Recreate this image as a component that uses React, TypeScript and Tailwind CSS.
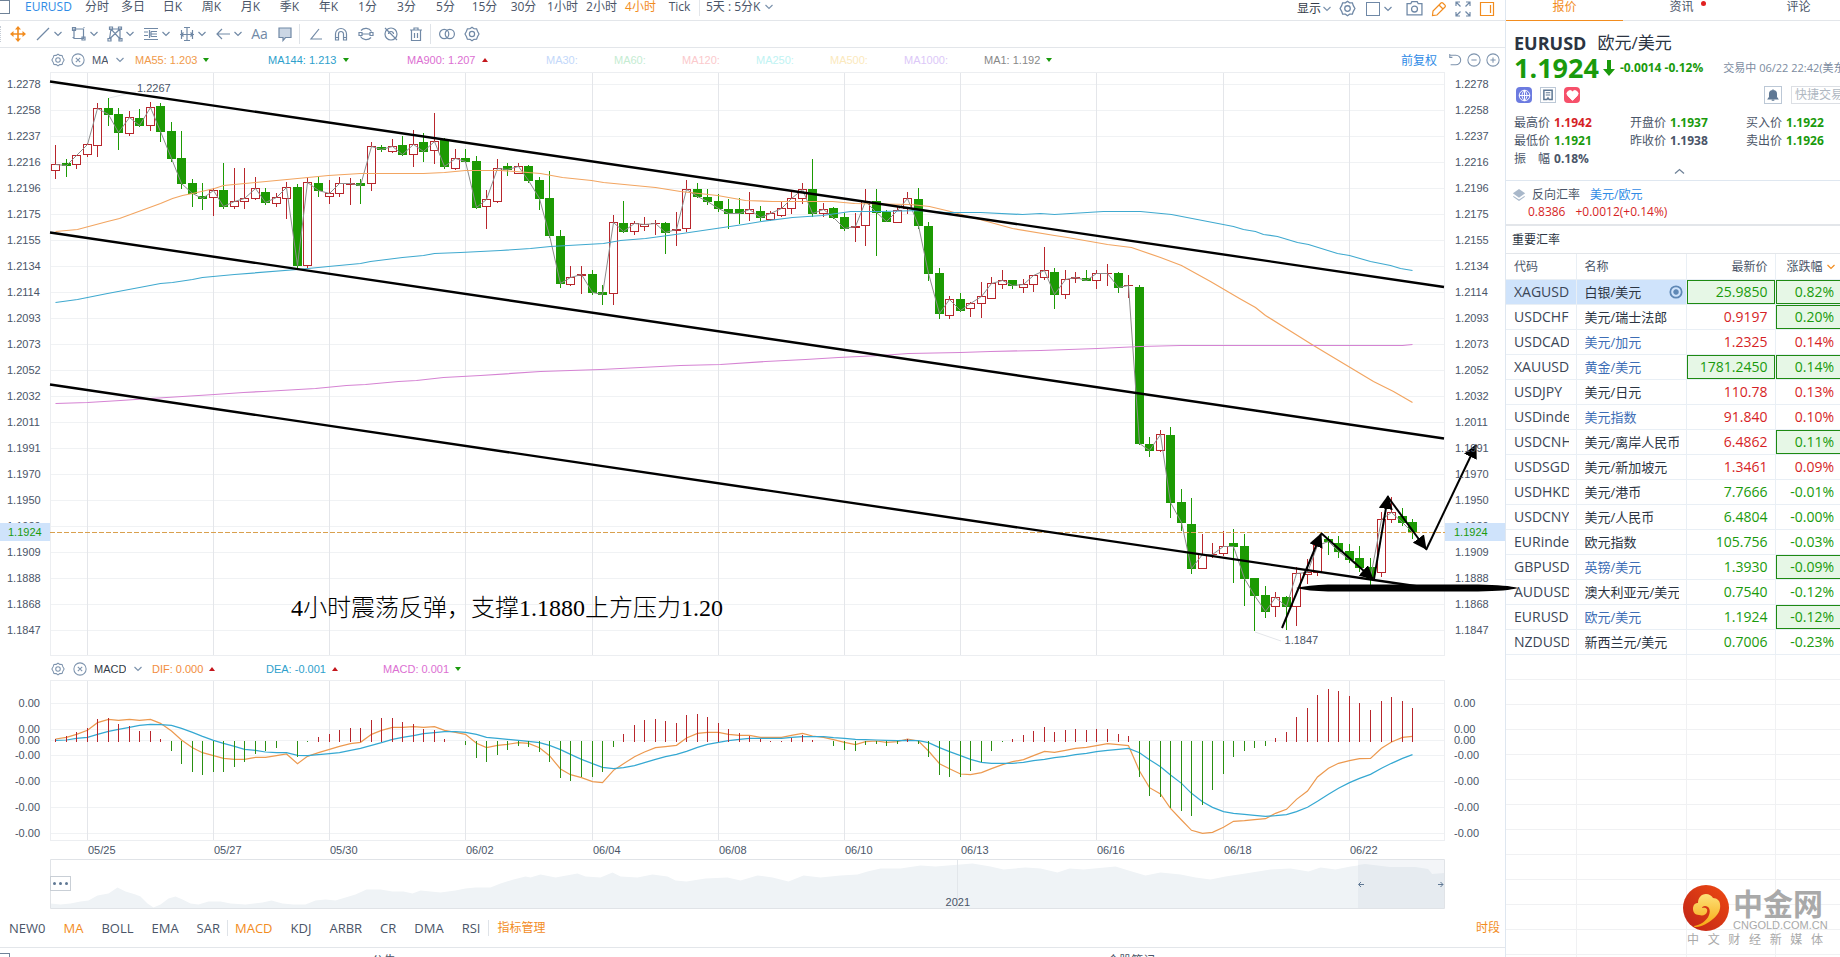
import React from "react";
import clsx from "clsx";

type Candle = [up: 0 | 1, high: number, top: number, bottom: number, low: number];
type Point = [number, number];

// Candles, one per 4h bar: direction and high / body top / body bottom / low
const candles: Candle[] = [
  [1, 145, 164, 171, 179], [0, 159, 163, 166, 177], [1, 155, 155, 165, 169], [1, 143, 144, 155, 157],
  [1, 103, 108, 146, 157], [0, 98, 108, 115, 126], [0, 108, 114, 133, 150], [1, 111, 117, 134, 136],
  [0, 109, 118, 126, 127], [1, 102, 107, 126, 131], [0, 103, 106, 132, 142], [0, 122, 131, 159, 162],
  [0, 131, 158, 184, 189], [0, 179, 183, 194, 207], [0, 183, 196, 199, 210], [1, 188, 190, 198, 216],
  [0, 163, 190, 207, 209], [1, 168, 201, 207, 209], [1, 168, 198, 202, 209], [1, 177, 188, 199, 200],
  [0, 188, 192, 203, 205], [1, 193, 197, 204, 207], [1, 182, 187, 199, 219], [0, 184, 187, 266, 269],
  [1, 177, 182, 266, 269], [0, 177, 183, 191, 197], [1, 180, 193, 197, 204], [1, 177, 183, 194, 197],
  [1, 178, 183, 185, 205], [0, 179, 183, 186, 204], [1, 142, 146, 184, 191], [0, 145, 147, 150, 152],
  [1, 139, 146, 152, 153], [0, 136, 145, 155, 156], [1, 130, 144, 155, 167], [0, 133, 142, 152, 162],
  [1, 113, 141, 151, 164], [0, 138, 139, 167, 169], [1, 149, 158, 169, 170], [0, 149, 158, 162, 163],
  [0, 156, 161, 208, 209], [1, 190, 199, 207, 229], [1, 159, 168, 202, 203], [0, 163, 166, 170, 176],
  [1, 163, 166, 174, 174], [0, 165, 166, 181, 183], [0, 177, 180, 199, 210], [0, 171, 198, 236, 238],
  [0, 230, 236, 284, 288], [1, 266, 277, 285, 286], [1, 266, 274, 276, 294], [0, 270, 274, 293, 295],
  [0, 285, 292, 295, 305], [1, 215, 222, 294, 305], [0, 201, 223, 232, 233], [1, 221, 223, 232, 235],
  [1, 217, 224, 227, 231], [1, 220, 223, 224, 235], [0, 222, 223, 233, 254], [1, 212, 229, 231, 246],
  [1, 180, 189, 229, 232], [0, 183, 189, 197, 198], [0, 189, 197, 202, 205], [0, 194, 201, 209, 212],
  [0, 199, 209, 214, 229], [0, 198, 209, 214, 224], [1, 192, 209, 214, 221], [0, 206, 211, 218, 221],
  [1, 211, 213, 220, 221], [1, 202, 208, 216, 217], [1, 191, 198, 209, 214], [1, 183, 189, 199, 204],
  [0, 159, 189, 214, 217], [1, 203, 209, 214, 217], [0, 207, 208, 218, 219], [0, 213, 217, 229, 231],
  [1, 213, 226, 228, 242], [1, 189, 201, 226, 246], [0, 189, 201, 213, 256], [0, 210, 212, 222, 222],
  [1, 207, 210, 223, 223], [1, 192, 198, 209, 214], [0, 188, 199, 226, 229], [0, 222, 226, 274, 281],
  [0, 268, 273, 314, 319], [1, 296, 299, 316, 319], [0, 293, 299, 311, 312], [1, 302, 303, 309, 317],
  [1, 282, 296, 304, 318], [1, 277, 283, 299, 299], [1, 270, 280, 285, 289], [0, 280, 280, 286, 289],
  [1, 279, 284, 288, 293], [1, 275, 275, 285, 292], [1, 247, 270, 278, 280], [0, 268, 272, 295, 309],
  [1, 270, 279, 295, 299], [1, 272, 277, 279, 283], [0, 270, 278, 281, 281], [1, 270, 273, 281, 289],
  [1, 264, 273, 274, 286], [0, 272, 273, 288, 293], [1, 275, 285, 286, 298], [0, 285, 287, 444, 445],
  [0, 437, 444, 451, 457], [1, 430, 434, 451, 452], [0, 427, 435, 503, 518], [0, 489, 502, 523, 531],
  [0, 498, 524, 569, 574], [1, 534, 554, 569, 569], [1, 543, 554, 555, 558], [1, 531, 546, 554, 556],
  [0, 529, 543, 547, 583], [0, 534, 546, 579, 606], [0, 578, 578, 596, 631], [0, 586, 595, 612, 618],
  [1, 592, 597, 607, 617], [0, 596, 597, 607, 630], [1, 567, 573, 607, 626], [1, 559, 572, 575, 584],
  [1, 543, 545, 573, 576], [0, 536, 539, 542, 555], [0, 536, 543, 552, 558], [0, 544, 551, 560, 563],
  [0, 546, 558, 568, 572], [0, 558, 567, 578, 585], [1, 512, 519, 573, 577], [1, 497, 512, 520, 523],
  [0, 508, 516, 523, 526], [0, 519, 522, 533, 539],
];

const ma55: Point[] = [
  [55, 231], [77, 229], [107, 221], [119, 218], [160, 203], [172, 198], [182, 195], [192, 193], [214, 188],
  [223, 185], [255, 182], [297, 178], [328, 175], [360, 173], [423, 173], [444, 172], [465, 170], [500, 170],
  [515, 171], [540, 173], [562, 177], [591, 180], [603, 182], [655, 187], [680, 191], [717, 195], [745, 200],
  [772, 201], [832, 201], [854, 203], [910, 204], [929, 206], [950, 211], [983, 220], [1012, 228], [1054, 235],
  [1067, 237], [1107, 244], [1131, 247], [1160, 257], [1181, 265], [1210, 281], [1239, 298], [1255, 307],
  [1265, 315], [1297, 335], [1313, 345], [1373, 381], [1393, 391], [1412, 402],
];

const ma144: Point[] = [
  [55, 302], [77, 299], [107, 293], [139, 287], [160, 283], [172, 282], [192, 279], [202, 277], [234, 274],
  [297, 269], [328, 266], [360, 263], [370, 261], [402, 257], [423, 255], [434, 253], [460, 252], [500, 250],
  [530, 248], [550, 246], [603, 243], [620, 240], [645, 238], [675, 234], [743, 224], [761, 221], [792, 217],
  [822, 215], [850, 211], [880, 211], [920, 210], [945, 212], [980, 212], [1022, 214], [1040, 213], [1054, 214],
  [1103, 211], [1140, 211], [1171, 214], [1233, 226], [1243, 229], [1255, 231], [1263, 234], [1277, 236],
  [1297, 242], [1308, 244], [1337, 253], [1349, 255], [1370, 261], [1390, 265], [1400, 268], [1412, 270],
];

const ma900: Point[] = [
  [55, 403], [87, 402], [120, 400], [150, 398], [214, 394], [243, 392], [263, 391], [315, 388], [346, 385],
  [365, 384], [398, 381], [416, 380], [443, 377], [480, 375], [540, 371], [600, 369], [680, 365], [720, 364],
  [765, 361], [805, 359], [838, 357], [880, 355], [908, 353], [960, 352], [990, 351], [1040, 350], [1097, 348],
  [1140, 346], [1180, 345], [1402, 345], [1412, 344],
];

const macdBars = [
  3, 6, 10, 14, 23, 24, 18, 16, 11, 11, 3, -10, -23, -31, -34, -31, -31, -26, -21, -13, -10, -7, 0, -16, -1, 5, 8,
  12, 14, 14, 22, 24, 24, 20, 18, 13, 12, 3, 0, -4, -17, -21, -14, -9, -5, -6, -11, -21, -37, -40, -36, -36, -31,
  -6, 8, 17, 22, 23, 21, 19, 27, 28, 25, 19, 13, 9, 6, 3, 1, 1, 4, 7, 2, 0, -5, -9, -10, -4, -3, -5, -3, 3, -3,
  -16, -34, -36, -36, -30, -21, -10, -1, 3, 7, 11, 15, 10, 12, 13, 12, 13, 13, 8, 6, -36, -55, -56, -67, -70, -75,
  -64, -49, -33, -16, -10, -7, -5, 4, 10, 25, 34, 47, 53, 51, 46, 39, 32, 41, 45, 41, 34,
];

// DIF / DEA are kept in thirds of a pixel so the slow curve stays smooth
const dif = [
  297, 292, 283, 271, 248, 238, 241, 238, 241, 238, 250, 273, 300, 323, 338, 347, 355, 358, 358, 352, 352, 347,
  342, 371, 349, 338, 328, 319, 311, 307, 283, 271, 262, 262, 260, 262, 260, 271, 277, 283, 310, 323, 316, 313,
  308, 310, 323, 347, 387, 404, 413, 425, 428, 391, 371, 350, 336, 323, 320, 316, 294, 280, 277, 277, 283, 286,
  286, 292, 292, 292, 286, 280, 288, 292, 299, 307, 314, 305, 303, 307, 305, 297, 303, 333, 371, 386, 402, 404,
  398, 386, 374, 365, 359, 347, 334, 337, 331, 325, 322, 317, 311, 314, 317, 393, 443, 462, 505, 540, 571, 580,
  577, 562, 544, 542, 539, 536, 520, 508, 478, 453, 411, 385, 370, 362, 356, 355, 325, 306, 292, 289,
];
const dea = [
  301, 300, 295, 292, 283, 274, 268, 262, 256, 253, 254, 256, 265, 277, 289, 301, 310, 319, 328, 331, 336, 338,
  338, 346, 347, 344, 341, 338, 331, 325, 316, 308, 298, 292, 287, 281, 278, 275, 275, 277, 283, 292, 295, 298,
  301, 304, 308, 316, 329, 343, 358, 371, 382, 386, 383, 377, 368, 358, 350, 343, 334, 322, 313, 307, 302, 298,
  295, 295, 295, 295, 292, 290, 290, 290, 293, 295, 298, 299, 300, 301, 302, 301, 302, 308, 323, 335, 347, 358,
  367, 370, 370, 370, 367, 362, 358, 353, 349, 344, 340, 335, 331, 328, 325, 338, 359, 380, 405, 430, 460, 485,
  502, 515, 520, 523, 526, 529, 527, 524, 515, 502, 484, 463, 445, 428, 415, 403, 385, 370, 355, 344,
];

const overview: Point[] = [
  [50, 903], [60, 904], [70, 903], [80, 901], [88, 900], [97, 895], [108, 893], [117, 887], [125, 891], [135, 894],
  [140, 896], [147, 903], [153, 907], [160, 904], [168, 898], [175, 896], [182, 899], [190, 903], [198, 904],
  [208, 901], [220, 901], [230, 903], [245, 904], [262, 902], [271, 900], [282, 903], [293, 904], [305, 904],
  [315, 900], [325, 899], [335, 900], [345, 897], [355, 894], [366, 889], [380, 889], [392, 891], [403, 891],
  [412, 893], [420, 890], [440, 892], [455, 890], [465, 888], [475, 887], [490, 887], [500, 883], [513, 879],
  [525, 876], [530, 877], [540, 874], [555, 877], [577, 873], [585, 876], [600, 877], [612, 872], [620, 876],
  [637, 877], [652, 874], [667, 876], [675, 880], [686, 881], [705, 878], [727, 877], [740, 880], [757, 875],
  [772, 877], [788, 881], [803, 875], [820, 877], [840, 875], [857, 874], [867, 871], [880, 868], [900, 868],
  [920, 865], [935, 866], [960, 864], [972, 863], [990, 866], [1003, 869], [1025, 867], [1040, 868], [1057, 872],
  [1069, 868], [1083, 869], [1115, 866], [1128, 870], [1145, 875], [1160, 872], [1180, 874], [1195, 877],
  [1210, 879], [1225, 876], [1245, 873], [1270, 869], [1290, 868], [1308, 871], [1320, 867], [1335, 869],
  [1350, 866], [1365, 864], [1390, 867], [1415, 867], [1428, 869], [1432, 874], [1444, 873],
];

const priceTicks = [
  "1.2278", "1.2258", "1.2237", "1.2216", "1.2196", "1.2175", "1.2155", "1.2134", "1.2114", "1.2093", "1.2073",
  "1.2052", "1.2032", "1.2011", "1.1991", "1.1970", "1.1950", "1.1929", "1.1909", "1.1888", "1.1868", "1.1847",
];

const macdTicks = [
  { value: "0.00", y: 63, gap: "mt-[17px]" },
  { value: "0.00", y: 89, gap: "mt-[14px]" },
  { value: "0.00", y: 100, gap: "-mt-px" },
  { value: "-0.00", y: 115, gap: "mt-[3px]" },
  { value: "-0.00", y: 141, gap: "mt-[14px]" },
  { value: "-0.00", y: 167, gap: "mt-[14px]" },
  { value: "-0.00", y: 193, gap: "mt-[14px]" },
];

const dates = [
  { index: 3, label: "05/25" },
  { index: 15, label: "05/27" },
  { index: 26, label: "05/30" },
  { index: 39, label: "06/02" },
  { index: 51, label: "06/04" },
  { index: 63, label: "06/08" },
  { index: 75, label: "06/10" },
  { index: 86, label: "06/13" },
  { index: 99, label: "06/16" },
  { index: 111, label: "06/18" },
  { index: 123, label: "06/22" },
];

const periods = [
  "日K", "周K", "月K", "季K", "年K", "1分", "3分", "5分", "15分", "30分", "1小时", "2小时", "4小时", "Tick",
];

const quotes = [
  { code: "XAGUSD", name: "白银/美元", price: "25.9850", change: "0.82%", up: false, changeUp: false, priceBox: true, changeBox: true, active: true },
  { code: "USDCHF", name: "美元/瑞士法郎", price: "0.9197", change: "0.20%", up: true, changeUp: false, changeBox: true },
  { code: "USDCAD", name: "美元/加元", price: "1.2325", change: "0.14%", up: true, changeUp: true, link: true },
  { code: "XAUUSD", name: "黄金/美元", price: "1781.2450", change: "0.14%", up: false, changeUp: false, priceBox: true, changeBox: true, link: true },
  { code: "USDJPY", name: "美元/日元", price: "110.78", change: "0.13%", up: true, changeUp: true },
  { code: "USDindex", name: "美元指数", price: "91.840", change: "0.10%", up: true, changeUp: true, link: true },
  { code: "USDCNH", name: "美元/离岸人民币", price: "6.4862", change: "0.11%", up: true, changeUp: false, changeBox: true },
  { code: "USDSGD", name: "美元/新加坡元", price: "1.3461", change: "0.09%", up: true, changeUp: true },
  { code: "USDHKD", name: "美元/港币", price: "7.7666", change: "-0.01%", up: false, changeUp: false },
  { code: "USDCNY", name: "美元/人民币", price: "6.4804", change: "-0.00%", up: false, changeUp: false },
  { code: "EURindex", name: "欧元指数", price: "105.756", change: "-0.03%", up: false, changeUp: false },
  { code: "GBPUSD", name: "英镑/美元", price: "1.3930", change: "-0.09%", up: false, changeUp: false, changeBox: true, link: true },
  { code: "AUDUSD", name: "澳大利亚元/美元", price: "0.7540", change: "-0.12%", up: false, changeUp: false },
  { code: "EURUSD", name: "欧元/美元", price: "1.1924", change: "-0.12%", up: false, changeUp: false, changeBox: true, link: true },
  { code: "NZDUSD", name: "新西兰元/美元", price: "0.7006", change: "-0.23%", up: false, changeUp: false },
];

const stats = [
  { label: "最高价", value: "1.1942", color: "text-[#d61f26]" },
  { label: "开盘价", value: "1.1937", color: "text-[#1a9a0c]" },
  { label: "买入价", value: "1.1922", color: "text-[#1a9a0c]" },
  { label: "最低价", value: "1.1921", color: "text-[#1a9a0c]" },
  { label: "昨收价", value: "1.1938", color: "text-[#4a5568]" },
  { label: "卖出价", value: "1.1926", color: "text-[#1a9a0c]" },
  { label: "振　幅", value: "0.18%", color: "text-[#4a5568]" },
];

const barX = (index: number) => 55 + Math.round(index * 10.52);
const toPoints = (points: Point[]) => points.map(([x, y]) => `${x + 0.5},${y + 0.5}`).join(" ");
const seriesPoints = (values: number[]) => values.map((v, i) => `${barX(i) + 0.5},${v / 3}`).join(" ");

function Icon({
  size = 16,
  className,
  children,
}: {
  size?: number;
  className?: string;
  children: React.ReactNode;
}) {
  return (
    <svg
      width={size}
      height={size}
      viewBox="0 0 16 16"
      fill="none"
      stroke="currentColor"
      strokeWidth="1.2"
      className={clsx("shrink-0", className)}
      aria-hidden="true"
    >
      {children}
    </svg>
  );
}

function Chevron({ className }: { className?: string }) {
  return (
    <svg
      width="8"
      height="6"
      viewBox="0 0 8 6"
      fill="none"
      stroke="currentColor"
      strokeWidth="1.2"
      className={clsx("shrink-0", className)}
    >
      <path d="M.5 1L4 4.500 7.500 1" />
    </svg>
  );
}

function Gear({ size = 16 }: { size?: number }) {
  return (
    <Icon size={size}>
      <path d="M8 1.200l2 1.500 2.600.1.900 2.500L15 8l-1.500 2.700-.9 2.500-2.600.1-2 1.500-2-1.500-2.600-.1-.9-2.500L1 8l1.500-2.700.9-2.500L6 2.700z" />
      <circle cx="8" cy="8" r="2.600" />
    </Icon>
  );
}

function CloseCircle({ size = 14 }: { size?: number }) {
  return (
    <Icon size={size}>
      <circle cx="8" cy="8" r="7" />
      <path d="M5.500 5.500l5 5M10.500 5.500l-5 5" />
    </Icon>
  );
}

function Triangle({ up }: { up?: boolean }) {
  return (
    <svg width="6" height="4" viewBox="0 0 6 4" className={up ? "text-[#c4161c]" : "text-[#1a9a0c]"}>
      <path d={up ? "M0 4l3-4 3 4z" : "M0 0l3 4 3-4z"} fill="currentColor" />
    </svg>
  );
}

function TopBar() {
  return (
    <div className="flex h-[21px] shrink-0 items-start border-b border-[#e3e6ea] text-xs leading-[14px] text-[#4a5568]">
      <span className="h-3.5 w-2.5 shrink-0 border border-l-0 border-[#6f8298]" />
      <span className="ml-[15px] w-[54px] text-[#2f8be6]">EURUSD</span>
      <button type="button" className="w-9">分时</button>
      <button type="button" className="mr-0.5 w-9">多日</button>
      {periods.map((period) => (
        <button
          key={period}
          type="button"
          className={clsx("w-[39px] whitespace-nowrap", period === "4小时" && "text-[#f28c1e]")}
        >
          {period}
        </button>
      ))}
      <span className="h-4 w-px bg-[#e3e6ea]" />
      <div className="ml-1.5 flex items-center gap-1">
        <select aria-label="自定义周期" className="appearance-none bg-transparent">
          <option>5天 : 5分K</option>
        </select>
        <Chevron className="text-[#7d93ad]" />
      </div>
      <div className="ml-auto flex items-center text-[#6f88a6]">
        <button type="button" className="flex items-center gap-0.5 text-[#333b47]">
          显示
          <Chevron className="text-[#7d93ad]" />
        </button>
        <button type="button" aria-label="设置" className="ml-2">
          <Gear size={17} />
        </button>
        <button type="button" aria-label="布局" className="ml-2.5 flex items-center gap-1">
          <span className="h-3.5 w-3.5 border border-[#6f88a6]" />
          <Chevron />
        </button>
        <button type="button" aria-label="截图" className="ml-3.5">
          <Icon size={17}>
            <path d="M1 3.500h3.500l1-2h5l1 2H15v10.500H1z" />
            <circle cx="8" cy="8.500" r="2.800" />
          </Icon>
        </button>
        <button type="button" aria-label="画线" className="ml-2 text-[#f28c1e]">
          <Icon>
            <path d="M1.500 14.500l.5-4.500L10 2q.9-.9 1.800 0l2.200 2.200q.9.9 0 1.800L6 14zM8 4l4 4" />
          </Icon>
        </button>
        <button type="button" aria-label="全屏" className="ml-2">
          <Icon>
            <path d="M1 5V1h4M11 1h4v4M15 11v4h-4M5 15H1v-4M1.500 1.500l4 4M14.500 1.500l-4 4M14.500 14.500l-4-4M1.500 14.500l4-4" />
          </Icon>
        </button>
        <button type="button" aria-label="侧栏" className="mr-2.5 ml-2 text-[#f28c1e]">
          <Icon>
            <path d="M1.500 1.500h13v13h-13zM11.500 4v8" />
          </Icon>
        </button>
      </div>
    </div>
  );
}

const drawTools: { label: string; icon: React.ReactNode }[] = [
  { label: "线段", icon: <path d="M2 14L14 2" /> },
  { label: "矩形", icon: <path d="M3 3h9.500v9.500H3zM1.500 1.500h3v3h-3zM11 11h3v3h-3zM1.500 11.500h2M12.500 1.500h1" /> },
  { label: "形态", icon: <path d="M2.500 13L4 3l9 10V3L2.500 13M4 3l8.500 0M1 12.500h3v2.500H1zM12 12.500h3v2.500h-3zM2.500 1h3v2.500h-3zM11.500 1h3v2.500h-3z" /> },
  { label: "斐波那契", icon: <path d="M1 2.500h14M1 6h4M1 9.500h4M1 13.500h14M8 5.500h6M8 8h6M8 10.500h6M8 5.500v5M6.500 4v8" /> },
  { label: "测量", icon: <path d="M2.500 4v9M13.500 4v9M1 8.500h14M8 1v14M5 1.500h6M5 14.500h6M4.500 6.500L2.500 8.500l2 2M11.500 6.500l2 2-2 2" /> },
  { label: "箭头", icon: <path d="M15 8H2M7 3L2 8l5 5" /> },
];

function ToolButton({ label, children }: { label: string; children: React.ReactNode }) {
  return (
    <button type="button" aria-label={label} className="flex w-[25px] shrink-0 justify-center">
      {children}
    </button>
  );
}

function DrawToolbar() {
  return (
    <div className="flex h-[27px] shrink-0 items-center border-b border-[#e3e6ea] text-[#7189a6]">
      <span className="h-4 w-px border-l border-dotted border-[#c5ccd5]" />
      <button type="button" aria-label="移动" className="flex w-[34px] justify-center text-[#f28c1e]">
        <Icon>
          <path d="M8 1v14M1 8h14" strokeWidth="1.600" />
          <path d="M8 0l3 3.500H5zM8 16l3-3.500H5zM0 8l3.500-3v6zM16 8l-3.500-3v6z" fill="currentColor" stroke="none" />
        </Icon>
      </button>
      {drawTools.map((tool, i) => (
        <button
          key={tool.label}
          type="button"
          aria-label={tool.label}
          className={clsx("flex shrink-0 items-center gap-[3px]", i === drawTools.length - 1 ? "w-8" : "w-9")}
        >
          <Icon>{tool.icon}</Icon>
          <Chevron />
        </button>
      ))}
      <ToolButton label="文字">
        <span className="text-sm leading-4">Aa</span>
      </ToolButton>
      <ToolButton label="标注">
        <Icon>
          <path d="M2 2h12v9.500H8.500L6 14.500v-3H2z" fill="#cbd6e4" />
        </Icon>
      </ToolButton>
      <span className="mr-[3px] ml-0.5 h-5 w-px bg-[#dfe3e8]" />
      <ToolButton label="角度">
        <Icon>
          <path d="M11 3L3 13h11" />
        </Icon>
      </ToolButton>
      <ToolButton label="磁吸">
        <Icon>
          <path d="M2.500 14V8a5.500 5.500 0 0111 0v6h-3V8a2.500 2.500 0 00-5 0v6zM2.500 11.500h3M10.500 11.500h3" />
        </Icon>
      </ToolButton>
      <ToolButton label="连续画线">
        <Icon>
          <path d="M3 4.500a6.500 6.500 0 0110.500 1M13 11.500a6.500 6.500 0 01-10.500-1M4 8h8" />
          <path d="M1 6.500h3v3H1zM12 6.500h3v3h-3z" />
        </Icon>
      </ToolButton>
      <ToolButton label="隐藏">
        <Icon>
          <circle cx="8" cy="8" r="6" />
          <path d="M2 2l12 12M5.500 8a2.500 2.500 0 015 0" />
        </Icon>
      </ToolButton>
      <ToolButton label="删除">
        <Icon>
          <path d="M2 4h12M3.500 4v10.500h9V4M6 4V2h4v2M6.500 7v5M9.500 7v5" />
        </Icon>
      </ToolButton>
      <span className="mr-[3px] ml-0.5 h-5 w-px bg-[#dfe3e8]" />
      <ToolButton label="对比">
        <Icon>
          <circle cx="5.200" cy="8" r="4.600" />
          <circle cx="10.800" cy="8" r="4.600" />
        </Icon>
      </ToolButton>
      <ToolButton label="设置">
        <Gear />
      </ToolButton>
    </div>
  );
}

const maLegend = [
  { text: "MA55: 1.203", className: "w-[133px] text-[#f09a4a]", mark: "down" },
  { text: "MA144: 1.213", className: "w-[139px] text-[#2e9fcc]", mark: "down" },
  { text: "MA900: 1.207", className: "w-[139px] text-[#dc6fd2]", mark: "up" },
  { text: "MA30:", className: "w-[68px] text-[#c3d8fa]" },
  { text: "MA60:", className: "w-[68px] text-[#c5ecd2]" },
  { text: "MA120:", className: "w-[74px] text-[#fbc9cc]" },
  { text: "MA250:", className: "w-[74px] text-[#c0f3f3]" },
  { text: "MA500:", className: "w-[74px] text-[#fbe9bd]" },
  { text: "MA1000:", className: "w-[80px] text-[#dcc8f8]" },
  { text: "MA1: 1.192", className: "w-[80px] text-[#888888]", mark: "down" },
];

function MaLegend() {
  return (
    <div className="flex h-[23px] shrink-0 items-center pt-px pl-[51px] font-['Liberation_Sans',sans-serif] text-[11px] leading-4 text-[#4a5568]">
      <button type="button" aria-label="指标设置" className="mr-[6px] text-[#7d93ad]">
        <Gear size={14} />
      </button>
      <button type="button" aria-label="关闭指标" className="mr-[7px] text-[#7d93ad]">
        <CloseCircle />
      </button>
      <select aria-label="主图指标" className="mr-2 w-4 appearance-none bg-transparent">
        <option>MA</option>
      </select>
      <Chevron className="mr-[11px] text-[#7d93ad]" />
      {maLegend.map((item) => (
        <span key={item.text} className={clsx("flex shrink-0 items-center gap-1.5 whitespace-nowrap", item.className)}>
          {item.text}
          {item.mark && <Triangle up={item.mark === "up"} />}
        </span>
      ))}
      <div className="mr-[5px] ml-auto flex items-center gap-[5px] text-[#7d93ad]">
        <button type="button" className="mr-1.5 font-['Noto_Sans_CJK_SC',sans-serif] text-xs leading-4 text-[#2f8be6]">
          前复权
        </button>
        <Icon size={14}>
          <path d="M2 2.500h7a5.500 5.500 0 010 11H3M2 1v4h3" />
        </Icon>
        <Icon size={14}>
          <circle cx="8" cy="8" r="7" />
          <path d="M5 8h6" />
        </Icon>
        <Icon size={14}>
          <circle cx="8" cy="8" r="7" />
          <path d="M5 8h6M8 5v6" />
        </Icon>
      </div>
    </div>
  );
}

function PriceAxis({ side }: { side: "left" | "right" }) {
  return (
    <div
      className={clsx(
        "relative shrink-0 font-['Liberation_Sans',sans-serif] text-[11px] text-[#4a5568]",
        side === "left" ? "w-[50px]" : "w-[60px]",
      )}
    >
      {priceTicks.map((tick) => (
        <div key={tick} className={clsx("h-[26px] leading-[26px]", side === "left" ? "pl-[7px]" : "pl-2.5")}>
          {tick}
        </div>
      ))}
      <div
        className={clsx(
          "absolute inset-x-0 top-[452px] h-[18px] bg-[#cfe3fb] leading-[18px] text-[#1a9a0c]",
          side === "left" ? "pl-2" : "pl-[9px]",
        )}
      >
        1.1924
      </div>
    </div>
  );
}

function PriceChart() {
  const closeLine = candles
    .map(([up, , top, bottom], i) => `${barX(i) + 0.5},${up ? top + 0.5 : bottom - 0.5}`)
    .join(" ");
  const arrows = [
    [1282, 628, 1321, 534],
    [1321, 533, 1373, 579],
    [1374, 579, 1388, 496],
    [1388, 497, 1426, 549],
    [1426, 550, 1476, 445],
  ];

  return (
    <div className="relative min-w-0 flex-1">
      <svg
        viewBox="50 71 1395 585"
        preserveAspectRatio="none"
        className="block h-full w-full overflow-visible"
        aria-hidden="true"
      >
        <defs>
          <marker id="head" viewBox="0 0 14 14" refX="13" refY="7" markerWidth="14" markerHeight="14" markerUnits="userSpaceOnUse" orient="auto">
            <path d="M0 0l14 7-14 7z" />
          </marker>
        </defs>

        {/* grid */}
        <g shapeRendering="crispEdges">
          {priceTicks.map((tick, i) => (
            <rect key={tick} x="50" y={84 + i * 26} width="1395" height="1" fill="#f0f2f4" />
          ))}
          {dates.map(({ index }) => (
            <rect key={index} x={barX(index)} y="72" width="1" height="584" fill="#e4e6ea" />
          ))}
          <path d="M50.500 655.500v-583h1394v583z" fill="none" stroke="#eceef1" />
        </g>

        {/* candles */}
        <g shapeRendering="crispEdges">
          {candles.map(([up, high, top, bottom, low], i) => {
            const x = barX(i);
            if (!up) {
              return (
                <g key={i} fill="#1c9a03">
                  <rect x={x} y={high} width="1" height={Math.max(low - high, 1)} />
                  <rect x={x - 4} y={top} width="9" height={Math.max(bottom - top, 1)} />
                </g>
              );
            }
            return (
              <g key={i} fill="#b8262c">
                <rect x={x} y={high} width="1" height={top - high} />
                <rect x={x} y={bottom} width="1" height={low - bottom} />
                {bottom - top > 1 ? (
                  <rect x={x - 3.5} y={top + 0.5} width="8" height={bottom - top - 1} fill="#ffffff" stroke="#b8262c" />
                ) : (
                  <rect x={x - 4} y={top} width="9" height="1" />
                )}
              </g>
            );
          })}
        </g>

        {/* moving averages */}
        <g fill="none">
          <polyline points={closeLine} stroke="#8c8c8c" />
          <polyline points={toPoints(ma55)} stroke="#f2a561" strokeWidth="1.200" />
          <polyline points={toPoints(ma144)} stroke="#3fa9cf" strokeWidth="1.200" />
          <polyline points={toPoints(ma900)} stroke="#d583d3" strokeWidth="1.200" />
          <path d="M50 532.500h1395" stroke="#d9a04e" strokeDasharray="5 2" />
          <path d="M109 98l13-3 14-3M1255 632l26 9" stroke="#e4e6ea" />
        </g>

        {/* trend lines, support zone and the projected path */}
        <g stroke="#000000" strokeWidth="2.400">
          <path d="M50 81.500L1444 287M50 232.500L1444 438.500M50 384.500L1425 587.500" />
          {arrows.map(([x1, y1, x2, y2]) => (
            <line key={x1 + y1} x1={x1} y1={y1} x2={x2} y2={y2} strokeWidth="2" markerEnd="url(#head)" />
          ))}
        </g>
        <path d="M1296 588q12-3 32-3.500h150q30 .5 40 3.500-10 3-40 3.500h-150q-20-.5-32-3.500z" />
      </svg>
      <span className="absolute top-[10px] left-[87px] font-['Liberation_Sans',sans-serif] text-[11px] leading-[14px] text-[#4a5568]">
        1.2267
      </span>
      <span className="absolute top-[562px] left-[88.5%] font-['Liberation_Sans',sans-serif] text-[11px] leading-[14px] text-[#4a5568]">
        1.1847
      </span>
      <p className="absolute top-[521px] left-[241px] font-['Liberation_Serif','Noto_Sans_CJK_SC',serif] text-2xl leading-8 font-light whitespace-nowrap text-black">
        4小时震荡反弹，支撑1.1880上方压力1.20
      </p>
    </div>
  );
}

const macdLegend = [
  { text: "DIF: 0.000", className: "w-[114px] text-[#f28c3c]", up: true },
  { text: "DEA: -0.001", className: "w-[117px] text-[#2e9fcc]", up: true },
  { text: "MACD: 0.001", className: "w-[117px] text-[#dc6fd2]", up: false },
];

function MacdLegend() {
  return (
    <div className="flex h-6 shrink-0 items-center pt-px pl-[51px] font-['Liberation_Sans',sans-serif] text-[11px] leading-4 text-[#333b47]">
      <button type="button" aria-label="指标设置" className="mr-2 text-[#7d93ad]">
        <Gear size={14} />
      </button>
      <button type="button" aria-label="关闭指标" className="mr-[7px] text-[#7d93ad]">
        <CloseCircle />
      </button>
      <select aria-label="副图指标" className="mr-2 w-8 appearance-none bg-transparent">
        <option>MACD</option>
      </select>
      <Chevron className="mr-2.5 text-[#7d93ad]" />
      {macdLegend.map((item) => (
        <span key={item.text} className={clsx("flex items-center gap-1.5 whitespace-nowrap", item.className)}>
          {item.text}
          <Triangle up={item.up} />
        </span>
      ))}
    </div>
  );
}

function MacdAxis({ side }: { side: "left" | "right" }) {
  return (
    <div
      className={clsx(
        "flex shrink-0 flex-col font-['Liberation_Sans',sans-serif] text-[11px] leading-[12px] text-[#4a5568]",
        side === "left" ? "w-[50px] items-end pr-2.5" : "w-[60px] pl-[9px]",
      )}
    >
      {macdTicks.map((tick) => (
        <span key={tick.y} className={tick.gap}>
          {tick.value}
        </span>
      ))}
    </div>
  );
}

function MacdChart() {
  return (
    <svg
      viewBox="50 40 1395 161"
      preserveAspectRatio="none"
      className="block h-[161px] min-w-0 flex-1"
      aria-hidden="true"
    >
      <g shapeRendering="crispEdges">
        {macdTicks.map((tick) => (
          <rect key={tick.y} x="50" y={tick.y} width="1395" height="1" fill="#f0f2f4" />
        ))}
        {dates.map(({ index }) => (
          <rect key={index} x={barX(index)} y="40" width="1" height="160" fill="#e4e6ea" />
        ))}
        <path d="M50.500 40.500h1394v160h-1394z" fill="none" stroke="#eceef1" />
      </g>
      <g fill="none">
        <polyline points={seriesPoints(dif)} stroke="#ec994f" strokeWidth="1.200" />
        <polyline points={seriesPoints(dea)} stroke="#35a8d2" strokeWidth="1.200" />
      </g>
      <g shapeRendering="crispEdges">
        {macdBars.map((value, i) => (
          <rect
            key={i}
            x={barX(i)}
            y={value > 0 ? 102 - value : 101}
            width="1"
            height={Math.abs(value)}
            fill={value > 0 ? "#b8262c" : "#2a8f12"}
          />
        ))}
      </g>
    </svg>
  );
}

function DateAxis() {
  return (
    <div className="relative mr-[60px] ml-[50px] h-[18px] shrink-0 font-['Liberation_Sans',sans-serif] text-[11px] leading-[18px] text-[#4a5568]">
      {dates.map(({ index, label }) => (
        <span key={label} className="absolute" style={{ left: `${((barX(index) - 49) / 1395) * 100}%` }}>
          {label}
        </span>
      ))}
    </div>
  );
}

function Navigator() {
  return (
    <div className="relative mr-[60px] ml-[50px] h-[50px] shrink-0 font-['Liberation_Sans',sans-serif] text-[11px] leading-3 text-[#4a5568]">
      <svg viewBox="50 859 1395 50" preserveAspectRatio="none" className="block h-full w-full" aria-hidden="true">
        <rect x="1358" y="859" width="86" height="49" fill="#f3f5f8" />
        <path d={`M50 908L${toPoints(overview).replaceAll(" ", "L")}L1444 908z`} fill="#eff3f6" />
        <path d="M1358 908v-43l7-1 25 3h25l13 2 4 5 12-1v35z" fill="#e6ebf0" />
        <path d="M957.500 859v49" stroke="#e2e6ea" />
        <path d="M50.500 859.500h1394v49h-1394z" fill="none" stroke="#e0e3e7" />
        <path d="M1364 884.500h-5M1361 882l-2.500 2.500 2.500 2.500M1438 884.500h5M1440.500 882l2.500 2.500-2.500 2.500" fill="none" stroke="#5f7894" />
      </svg>
      <button
        type="button"
        aria-label="更多"
        className="absolute top-[17px] left-0 flex h-[15px] w-[21px] items-center justify-center gap-[3px] border border-[#c9cfd6] bg-white"
      >
        <span className="h-[3px] w-[3px] rounded-full bg-[#5f7894]" />
        <span className="h-[3px] w-[3px] rounded-full bg-[#5f7894]" />
        <span className="h-[3px] w-[3px] rounded-full bg-[#5f7894]" />
      </button>
      <span className="absolute bottom-px left-[64.2%]">2021</span>
    </div>
  );
}

function IndicatorBar() {
  const overlay = ["NEW0", "MA", "BOLL", "EMA", "SAR"];
  const pane = ["MACD", "KDJ", "ARBR", "CR", "DMA", "RSI"];
  return (
    <div className="flex h-[39px] shrink-0 items-center border-b border-[#e3e6ea] pl-[9px] text-[13px] leading-4 text-[#4a5568]">
      <div className="flex gap-[18px]">
        {overlay.map((name) => (
          <button key={name} type="button" className={name === "MA" ? "text-[#f28c1e]" : undefined}>
            {name}
          </button>
        ))}
      </div>
      <span className="mx-[7px] h-4 w-px bg-[#dfe3e8]" />
      <div className="flex gap-[18px]">
        {pane.map((name) => (
          <button key={name} type="button" className={name === "MACD" ? "text-[#f28c1e]" : undefined}>
            {name}
          </button>
        ))}
      </div>
      <span className="mx-2 h-4 w-px bg-[#dfe3e8]" />
      <button type="button" className="text-xs text-[#f28c1e]">指标管理</button>
      <button type="button" className="mr-[5px] ml-auto text-xs text-[#f28c1e]">时段</button>
    </div>
  );
}

function QuoteHeader() {
  return (
    <section className="border-b border-[#dfe7f0] pl-2">
      <div className="flex h-[22px] items-center gap-[11px] pt-[6px] leading-[22px] text-[#2b3442]">
        <h1 className="text-lg leading-[22px] font-bold">EURUSD</h1>
        <span className="text-[17px] leading-[22px]">欧元/美元</span>
      </div>
      <div className="mt-[3px] flex h-7 items-center whitespace-nowrap text-[#1a9a0c]">
        <strong className="text-[27px] leading-7">1.1924</strong>
        <svg width="12" height="16" viewBox="0 0 12 16" className="ml-1 shrink-0">
          <path d="M4 0h4v9h4l-6 7-6-7h4z" fill="currentColor" />
        </svg>
        <span className="ml-[5px] text-xs font-bold">-0.0014 -0.12%</span>
        <span className="ml-5 text-[11px] text-[#7b8ba0]">交易中 06/22 22:42(美东)</span>
      </div>
      <div className="mt-1 flex h-[18px] items-center">
        <button type="button" aria-label="外汇" className="ml-0.5 flex h-4 w-4 items-center justify-center rounded-sm bg-[#6c7be0] text-white">
          <Icon size={13}>
            <circle cx="8" cy="8" r="6.500" />
            <path d="M1.500 8h13M8 1.500v13M8 1.500c-4 4-4 9 0 13M8 1.500c4 4 4 9 0 13" />
          </Icon>
        </button>
        <button type="button" aria-label="笔记" className="ml-2 flex h-4 w-4 items-center justify-center border border-[#bcc8d6] text-[#5f7894]">
          <Icon size={12}>
            <path d="M2.500 1.500h11v12.500h-4L8 12l-1.500 2h-4z" strokeWidth="2" />
            <path d="M5 5h6M5 8h6" strokeWidth="1.500" />
          </Icon>
        </button>
        <button type="button" aria-label="自选" className="ml-2 flex h-4 w-4 items-center justify-center rounded-sm bg-[#f6506a] text-white">
          <Icon size={13}>
            <path d="M8 14L2 8a3.600 3.600 0 016-4.500A3.600 3.600 0 0114 8z" fill="currentColor" />
          </Icon>
        </button>
        <button type="button" aria-label="预警" className="mr-[9px] ml-auto flex h-[18px] w-[18px] items-center justify-center border border-[#bcc8d6] text-[#5f7894]">
          <Icon size={14}>
            <path d="M2.500 12.500h11l-1.500-2V7a4 4 0 00-8 0v3.500zM8 1.500V3M6.500 14h3" fill="currentColor" />
          </Icon>
        </button>
        <button type="button" className="h-[18px] w-[49px] overflow-hidden border border-r-0 border-[#dcdfe4] pl-[3px] text-left text-xs leading-4 whitespace-nowrap text-[#b0b8c2]">
          快捷交易
        </button>
      </div>
      <dl className="mt-2.5 grid grid-cols-[116px_116px_auto] text-xs leading-[18px] text-[#4a5568]">
        {stats.map((stat) => (
          <div key={stat.label} className="flex gap-1">
            <dt>{stat.label}</dt>
            <dd className={clsx("font-bold", stat.color)}>{stat.value}</dd>
          </div>
        ))}
      </dl>
      <button type="button" aria-label="收起" className="mx-auto flex h-3 pl-1 text-[#6f8298]">
        <svg width="11" height="7" viewBox="0 0 11 7" fill="none" stroke="currentColor" strokeWidth="1.300">
          <path d="M1 5.500l4.500-4 4.500 4" />
        </svg>
      </button>
    </section>
  );
}

function QuoteTable() {
  return (
    <table className="w-full table-fixed border-collapse text-left text-sm">
      <colgroup>
        <col className="w-[70px]" />
        <col className="w-[110px]" />
        <col className="w-[89px]" />
        <col />
      </colgroup>
      <thead>
        <tr className="h-[25px] border-b border-[#e9eff5] text-xs text-[#4a5568]">
          <th className="border-r border-[#e9eff5] p-0 pt-0.5 pl-2 font-normal">代码</th>
          <th className="border-r border-[#e9eff5] p-0 pt-0.5 pl-2 font-normal">名称</th>
          <th className="border-r border-[#e9eff5] p-0 pt-0.5 pr-[7px] text-right font-normal">最新价</th>
          <th className="p-0 pt-0.5 pl-[11px] font-normal">
            <span className="flex items-center gap-1">
              涨跌幅
              <Chevron className="text-[#f28c1e]" />
            </span>
          </th>
        </tr>
      </thead>
      <tbody>
        {quotes.map((quote) => (
          <tr key={quote.code} className="h-[25px] border-b border-[#e9eff5]">
            <td className={clsx("border-r border-[#e9eff5] p-0 pr-[7px] pl-2 text-[#3b4657]", quote.active && "bg-[#cfe3fb]")}>
              <div className="overflow-hidden leading-5 whitespace-nowrap">{quote.code}</div>
            </td>
            <td className={clsx("border-r border-[#e9eff5] p-0 pl-2", quote.active ? "bg-[#cfe3fb] pr-[3px]" : "pr-[7px]")}>
              <div className={clsx("flex items-center text-[13px] leading-5", quote.link ? "text-[#3d6db5]" : "text-[#2b3442]")}>
                <span className="flex-1 overflow-hidden whitespace-nowrap">{quote.name}</span>
                {quote.active && (
                  <Icon size={14} className="text-[#5f88b5]">
                    <circle cx="8" cy="8" r="6.500" strokeWidth="2" />
                    <circle cx="8" cy="8" r="2.500" fill="currentColor" />
                  </Icon>
                )}
              </div>
            </td>
            <td className="border-r border-[#e9eff5] p-0 text-right">
              <div
                className={clsx(
                  "h-6 border pr-1.5 leading-[22px]",
                  quote.up ? "text-[#d61f26]" : "text-[#1a9a0c]",
                  quote.priceBox ? "border-[#1d8a12] bg-[#e6f7e6]" : "border-transparent",
                )}
              >
                {quote.price}
              </div>
            </td>
            <td className="p-0 text-right">
              <div
                className={clsx(
                  "h-6 border border-r-0 pr-1.5 leading-[22px]",
                  quote.changeUp ? "text-[#d61f26]" : "text-[#1a9a0c]",
                  quote.changeBox ? "border-[#1d8a12] bg-[#e6f7e6]" : "border-transparent",
                )}
              >
                {quote.change}
              </div>
            </td>
          </tr>
        ))}
        {Array.from({ length: 13 }, (_, i) => (
          <tr key={i} className="h-[25px] border-b border-[#f0f1f3]">
            <td className="border-r border-[#f0f1f3] p-0" />
            <td className="border-r border-[#f0f1f3] p-0" />
            <td className="border-r border-[#f0f1f3] p-0" />
            <td className="p-0" />
          </tr>
        ))}
      </tbody>
    </table>
  );
}

function SiteLogo() {
  return (
    <div className="absolute right-[15px] bottom-2.5 w-[142px] text-[#a9a9a9]">
      <div className="flex items-center gap-1">
        <svg width="46" height="46" viewBox="0 0 46 46" className="shrink-0">
          <defs>
            <linearGradient id="disc" x1="1" y1="0" x2="0" y2="1">
              <stop offset="0" stopColor="#ee4a12" />
              <stop offset="1" stopColor="#bf2318" />
            </linearGradient>
            <linearGradient id="cloud" x1="0" y1="0" x2="0" y2="1">
              <stop offset="0" stopColor="#fde27a" />
              <stop offset="1" stopColor="#f7a811" />
            </linearGradient>
          </defs>
          <circle cx="23" cy="23" r="23" fill="url(#disc)" />
          <path
            d="M11 41c6-1 13-5 15-11 2-5 0-9-4-9-2 0-3 1-3 2 4-1 6 1 5 4-1 3-4 4-8 3-4 0-6-3-6-6 0-4 2-6 5-6 0-5 3-9 8-9 3 0 6 2 7 4 4 0 7 3 7 6 1 6-2 11-7 15-5 4-11 8-17 8-1 0-2 0-2-1z"
            fill="url(#cloud)"
          />
        </svg>
        <div>
          <div className="font-['Noto_Sans_CJK_SC',sans-serif] text-[30px] leading-[34px] font-bold">中金网</div>
          <div className="font-['Liberation_Sans',sans-serif] text-[11px] leading-3">CNGOLD.COM.CN</div>
        </div>
      </div>
      <div className="flex justify-between pt-0.5 pr-0.5 pl-1 text-xs leading-[14px]">
        {[..."中文财经新媒体"].map((char) => (
          <span key={char}>{char}</span>
        ))}
      </div>
    </div>
  );
}

function Sidebar() {
  return (
    <aside className="relative w-[335px] shrink-0 overflow-hidden border-l border-[#dfe7f0]">
      <nav className="flex h-[21px] items-start border-b border-[#e3e6ea] text-xs leading-[14px] text-[#4a5568]">
        <button type="button" className="h-[21px] w-[117px] shrink-0 border-b border-[#f28c1e] pb-1.5 text-[#f28c1e]">
          报价
        </button>
        <button type="button" className="relative w-[117px] shrink-0">
          资讯
          <span className="absolute top-px left-[78px] h-[5px] w-[5px] rounded-full bg-[#e02020]" />
        </button>
        <button type="button" className="w-[117px] shrink-0">评论</button>
      </nav>
      <div className="pt-2">
        <QuoteHeader />
      </div>
      <section className="border-b-2 border-[#e3e6ea] pt-[5px] pl-1.5 text-xs">
        <div className="flex h-[18px] items-center">
          <Icon size={14} className="text-[#a9b8ca]">
            <path d="M8 1l7 5-7 5-7-5z" fill="currentColor" stroke="none" />
            <path d="M1.500 9.500L8 14l6.500-4.500" />
          </Icon>
          <span className="ml-1.5 text-[#4a5568]">反向汇率</span>
          <a href="#usdeur" className="ml-2.5 text-[#2f8be6]">美元/欧元</a>
        </div>
        <div className="flex h-5 gap-2.5 pl-4 leading-4 text-[#d61f26]">
          <span>0.8386</span>
          <span>+0.0012(+0.14%)</span>
        </div>
      </section>
      <h2 className="h-7 border-b border-[#e3e6ea] pl-1.5 text-xs leading-7 text-[#2b3442]">重要汇率</h2>
      <QuoteTable />
      <SiteLogo />
    </aside>
  );
}

export default function App() {
  return (
    <div className="flex h-screen overflow-hidden bg-white font-['Open_Sans','Noto_Sans_CJK_SC',sans-serif]">
      <main className="relative z-10 flex min-w-0 flex-1 flex-col">
        <TopBar />
        <DrawToolbar />
        <MaLegend />
        <div className="flex h-[585px] shrink-0">
          <PriceAxis side="left" />
          <PriceChart />
          <PriceAxis side="right" />
        </div>
        <MacdLegend />
        <div className="flex shrink-0">
          <MacdAxis side="left" />
          <MacdChart />
          <MacdAxis side="right" />
        </div>
        <DateAxis />
        <Navigator />
        <IndicatorBar />
        <div className="flex shrink-0 items-start pt-[5px] text-xs leading-4 text-[#4a5568]">
          <span className="h-3.5 w-2.5 border border-l-0 border-[#6f8298]" />
          <div className="grid flex-1 grid-cols-2 text-center">
            <span>公告</span>
            <span>个股笔记</span>
          </div>
        </div>
      </main>
      <Sidebar />
    </div>
  );
}
